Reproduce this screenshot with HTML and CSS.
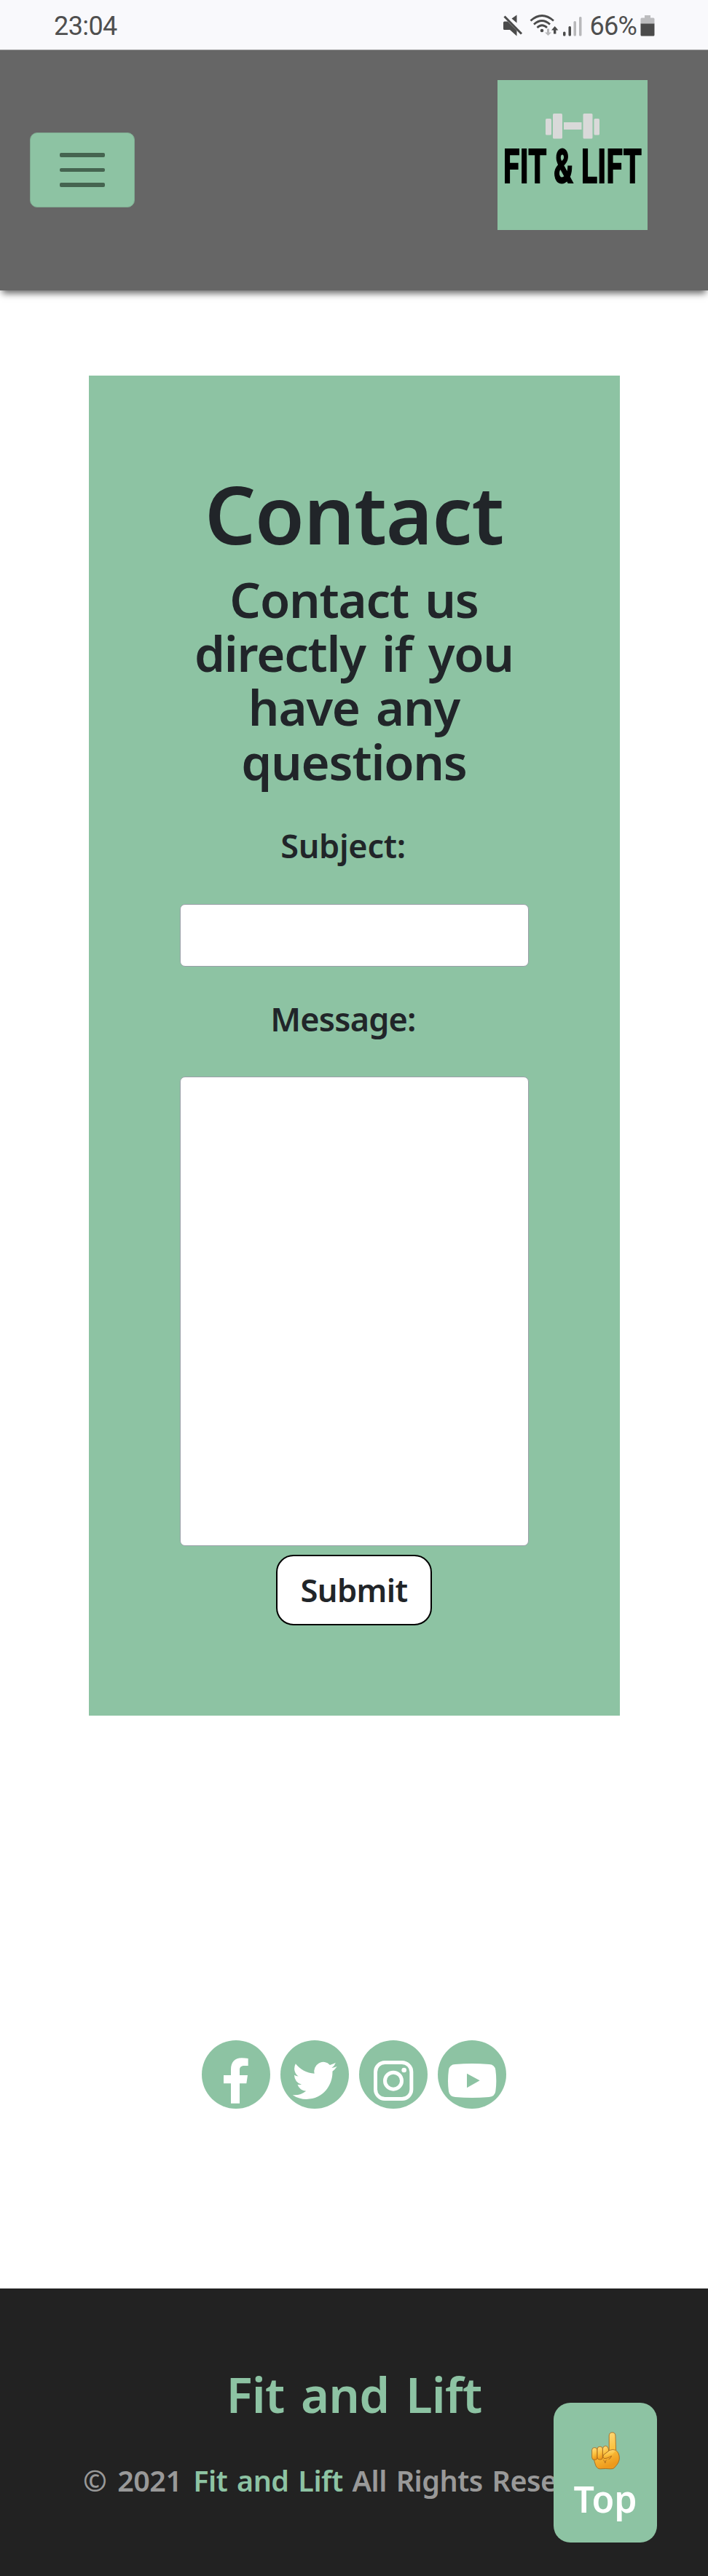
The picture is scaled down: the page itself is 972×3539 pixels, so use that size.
FILE: index.html
```html
<!DOCTYPE html>
<html lang="en">
<head>
<meta charset="utf-8">
<title>Fit and Lift - Contact</title>
<link rel="stylesheet" href="styles.css">
</head>
<body>
<div class="status">
  <span class="clock">23:04</span>
  <div class="status-right">
    <svg class="status-icons" viewBox="0 0 112 34" width="112" height="34">
      <g fill="#4b4b4b">
        <path d="M1 13q0-1.500 1.500-1.500H7L19.500 24v7.500L10 23H2.500Q1 23 1 21.500z"/>
        <path d="M12.500 7.500L19.500 2.500V13.500z"/>
        <path d="M2.500 4.500L26 28.500" stroke="#4b4b4b" stroke-width="3"/>
        <circle cx="54" cy="24" r="2.300"/>
        <path d="M70 28.500v-5h-3l4.700-5.500 4.700 5.500h-3v5z"/>
        <rect x="83" y="25.500" width="3.500" height="6" rx="1.500"/>
        <rect x="90.500" y="18" width="3.500" height="13.500" rx="1.500"/>
      </g>
      <g fill="none" stroke="#4b4b4b" stroke-width="2.700">
        <path d="M38.500 10.500Q54 -3.500 70 10.500M43 15.500Q54 5.500 65 15.500M47.500 20Q54 13.500 61 20"/>
      </g>
      <g fill="#b8b8ba">
        <path d="M61 21.500h3v5h3l-4.500 4.500-4.500-4.500h3z"/>
        <rect x="97.500" y="11" width="3.500" height="20.500" rx="1.500"/>
        <rect x="105" y="5" width="3.500" height="26.500" rx="1.500"/>
      </g>
    </svg>
    <span class="percent">66%</span>
    <svg class="battery" viewBox="0 0 20 30" width="20" height="30">
      <path d="M6 1h8v3.500h4Q19.500 4.500 19.500 6v7H.500V6Q.500 4.500 2 4.500h4z" fill="#bcbcbe"/>
      <path d="M.500 12.500h19V28q0 1.500-1.500 1.500H2Q.500 29.500.500 28z" fill="#4b4b4b"/>
    </svg>
  </div>
</div>
<header class="header">
  <button class="toggler" aria-label="Menu"><span></span><span></span><span></span></button>
  <svg class="logo" viewBox="0 0 206 206" width="206" height="206">
    <g fill="#d9d9d9">
      <rect x="66" y="53" width="8" height="22.500" rx="1.500"/>
      <rect x="76" y="46" width="13" height="34.500" rx="1.500"/>
      <rect x="91" y="58" width="24.500" height="10"/>
      <rect x="117.500" y="46" width="13" height="34.500" rx="1.500"/>
      <rect x="132.500" y="53" width="7.500" height="22.500" rx="1.500"/>
    </g>
    <text class="logo-text" transform="translate(8 140.500) scale(.635 1)">FIT &amp; LIFT</text>
  </svg>
</header>
<main>
  <form class="card">
    <h1>Contact</h1>
    <h2>Contact us directly if you have any questions</h2>
    <label class="label" for="subject">Subject:</label>
    <input class="field" id="subject" type="text">
    <label class="label label-next" for="message">Message:</label>
    <textarea class="field area" id="message"></textarea>
    <button class="submit" type="button">Submit</button>
  </form>
  <div class="social">
    <svg viewBox="51 69 282 282"><circle cx="192" cy="210" r="141" fill="#8dc3a3"/><path fill="#fff" d="M171 329V247H141V213H171V190C171 158 188 142 215 142Q230 142 242 144V174H226C212 174 207 181 207 192V213H240L235 247H207V329Z"/></svg>
    <svg viewBox="375 69 282 282"><circle cx="516" cy="210" r="141" fill="#8dc3a3"/><path fill="#fff" transform="translate(425 141) scale(7.625 7.850)" d="M23.953 4.570a10 10 0 0 1-2.825.775 4.958 4.958 0 0 0 2.163-2.723c-.951.555-2.005.959-3.127 1.184a4.920 4.920 0 0 0-8.384 4.482C7.690 8.095 4.067 6.130 1.640 3.162a4.822 4.822 0 0 0-.666 2.475c0 1.710.870 3.213 2.188 4.096a4.904 4.904 0 0 1-2.228-.616v.060a4.923 4.923 0 0 0 3.946 4.827 4.996 4.996 0 0 1-2.212.085 4.936 4.936 0 0 0 4.604 3.417 9.867 9.867 0 0 1-6.102 2.105c-.390 0-.779-.023-1.170-.067a13.995 13.995 0 0 0 7.557 2.209c9.053 0 13.998-7.496 13.998-13.985 0-.210 0-.420-.015-.630A9.935 9.935 0 0 0 24 4.590z"/></svg>
    <svg viewBox="699 69 282 282"><circle cx="840" cy="210" r="141" fill="#8dc3a3"/><g fill="none" stroke="#fff" stroke-width="15"><rect x="766.500" y="160.500" width="148" height="150" rx="39"/><circle cx="840" cy="236" r="34.500"/></g><circle cx="884" cy="192" r="10" fill="#fff"/></svg>
    <svg viewBox="1023 69 282 282"><circle cx="1164" cy="210" r="141" fill="#8dc3a3"/><path fill="#fff" fill-rule="evenodd" d="M1095 168Q1164 162 1234 168Q1258 169 1261 192Q1267 236 1261 279Q1258 301 1234 303Q1164 309 1095 303Q1071 301 1068 279Q1062 236 1068 192Q1071 169 1095 168ZM1143 206V265L1196 235Z"/></svg>
  </div>
</main>
<footer class="footer">
  <h3>Fit and Lift</h3>
  <p><span class="year">© 2021</span> <a>Fit and Lift</a> All Rights Reserved</p>
</footer>
<a class="top">
  <svg viewBox="750 362 116 154" width="39" height="52">
    <defs><linearGradient id="skin" x1="0" y1="0" x2=".3" y2="1"><stop offset="0" stop-color="#ffe08a"/><stop offset=".6" stop-color="#fbc23f"/><stop offset="1" stop-color="#ee9a1c"/></linearGradient></defs>
    <g fill="url(#skin)" stroke="#a3641a" stroke-width="2.500" stroke-linejoin="round">
      <path d="M822 440V377Q823 364 835 364Q847 364 848 377L850 437Q864 448 864 469C864 488 850 500 844 508Q839 514 828 513L807 512L786 513Q773 513 767 498L760 475V440Q780 425 822 440Z"/>
      <rect x="752" y="426" width="22" height="50" rx="10"/>
      <rect x="774" y="422" width="22" height="53" rx="10"/>
      <path d="M796 468V430Q798 419 808 419Q817 420 819 430L821 440L798 458"/>
      <path d="M850 437Q838 431 824 437L799 456Q795 466 801 470Q810 473 832 460Q830 470 820 474"/>
      <path d="M798 476Q804 479 806 489Q807 478 812 476" fill="none"/>
    </g>
  </svg>
  <span>Top</span>
</a>
</body>
</html>
```
FILE: styles.css
```css
* { box-sizing: border-box; }
body {
  margin: 0;
  height: 3539px;
  position: relative;
  display: flex;
  flex-direction: column;
  background: #fff;
  color: #212529;
  font-family: "Noto Sans", sans-serif;
  font-weight: 600;
  overflow: hidden;
}
.status {
  height: 69px;
  flex: none;
  display: flex;
  justify-content: space-between;
  align-items: flex-start;
  padding: 15px 73px 0 74px;
  background: #f9f9fc;
  border-bottom: 1px solid #a5a5a6;
  color: #4f4f4f;
  font: 400 36px/42px Roboto, sans-serif;
}
.clock { letter-spacing: -0.6px; }
.status-right { display: flex; align-items: flex-start; }
.status-icons { margin: 3px 8px 0 0; }
.percent { letter-spacing: -0.8px; margin-right: 5px; }
.battery { margin-top: 5px; }
.header {
  height: 329.500px;
  flex: none;
  display: flex;
  justify-content: space-between;
  align-items: flex-start;
  padding: 41px 83px 0 41px;
  background: #666;
  box-shadow: 0 7px 9px -3px rgba(0, 0, 0, 0.6);
}
.toggler {
  width: 144px;
  height: 103px;
  margin-top: 72px;
  padding: 0;
  display: flex;
  flex-direction: column;
  align-items: center;
  justify-content: center;
  gap: 15px;
  background: #8dc3a3;
  border: 1px solid #7fab91;
  border-radius: 10px;
}
.toggler span {
  width: 62px;
  height: 5.700px;
  border-radius: 2px;
  background: #456450;
}
.logo { background: #8dc3a3; }
.logo-text {
  font: 700 64px Roboto, sans-serif;
  letter-spacing: 0.6px;
  fill: #000;
  stroke: #000;
  stroke-width: 1.800px;
}
main {
  height: 2745.500px;
  flex: none;
  display: flex;
  flex-direction: column;
  align-items: center;
}
.card {
  width: 729px;
  height: 1841px;
  margin-top: 117.500px;
  padding: 123px 125px 0;
  display: flex;
  flex-direction: column;
  align-items: center;
  text-align: center;
  background: #8dc3a3;
}
h1, h2, h3, p { margin: 0; font-weight: 600; }
h1 { font-size: 110px; line-height: 132px; letter-spacing: -1px; }
h2 {
  margin-top: 14.500px;
  font-size: 67px;
  line-height: 74.400px;
  letter-spacing: -1.200px;
  word-spacing: 6px;
}
.label {
  margin: 45px 30px 0 0;
  font-size: 45px;
  line-height: 68px;
  letter-spacing: -0.300px;
}
.label-next { margin-top: 37.500px; letter-spacing: -0.800px; }
.field {
  width: 479px;
  height: 86.500px;
  flex: none;
  margin: 45.500px 0 0;
  padding: 12px;
  background: #fff;
  border: 1px solid #9a9fa8;
  border-radius: 7px;
  font: inherit;
}
.area { height: 644.500px; resize: none; }
.submit {
  width: 214px;
  height: 97px;
  margin-top: 12px;
  padding: 0;
  background: #fff;
  border: 2px solid #000;
  border-radius: 24px;
  color: #212529;
  font: 600 43.500px/90px "Noto Sans", sans-serif;
  letter-spacing: -0.600px;
}
.social {
  display: flex;
  gap: 14px;
  margin-top: 446px;
}
.social svg { width: 94px; height: 94px; }
.footer {
  flex: 1;
  padding-top: 93px;
  background: #222;
  color: #999;
}
.footer h3 {
  color: #8dc3a3;
  font-size: 67px;
  line-height: 104px;
  letter-spacing: -0.800px;
  text-align: center;
  word-spacing: 6px;
}
.footer p {
  margin: 40px 0 0 114px;
  font-size: 39.500px;
  line-height: 54px;
  letter-spacing: -0.500px;
  word-spacing: 3px;
  white-space: nowrap;
}
.year { margin-right: 3px; word-spacing: 5px; }
.footer a { color: #8dc3a3; }
.top {
  position: absolute;
  left: 760px;
  top: 3301px;
  width: 142px;
  height: 192px;
  padding-top: 40px;
  display: flex;
  flex-direction: column;
  align-items: center;
  background: #8dc3a3;
  border-radius: 23px;
  color: #fff;
  font-size: 50px;
  line-height: 60px;
}
.top span { margin-top: 10px; }
```
